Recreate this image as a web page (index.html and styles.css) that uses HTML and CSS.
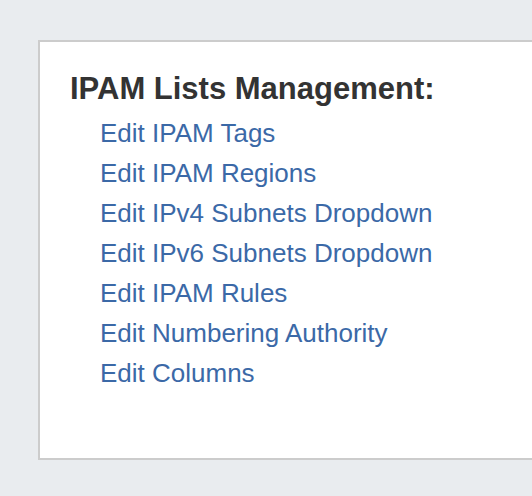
FILE: index.html
```html
<!DOCTYPE html>
<html>
<head>
<meta charset="utf-8">
<link rel="stylesheet" href="styles.css">
</head>
<body>
<div class="panel">
  <h2 class="title">IPAM Lists Management:</h2>
  <ul class="links">
    <li><a href="#">Edit IPAM Tags</a></li>
    <li><a href="#">Edit IPAM Regions</a></li>
    <li><a href="#">Edit IPv4 Subnets Dropdown</a></li>
    <li><a href="#">Edit IPv6 Subnets Dropdown</a></li>
    <li><a href="#">Edit IPAM Rules</a></li>
    <li><a href="#">Edit Numbering Authority</a></li>
    <li><a href="#">Edit Columns</a></li>
  </ul>
</div>
</body>
</html>
```

FILE: styles.css
```css
html, body {
  margin: 0;
  padding: 0;
}
body {
  background: #e9ecef;
  font-family: "Liberation Sans", Arial, sans-serif;
  overflow: hidden;
  height: 496px;
}
.panel {
  margin: 40px 0 0 38px;
  width: 494px;
  height: 420px;
  background: #fff;
  border: 2px solid #cccccc;
  border-right: none;
  padding: 29px 0 0 30px;
  box-sizing: border-box;
}
.title {
  margin: 0;
  font-size: 31px;
  font-weight: bold;
  color: #333;
  line-height: 36px;
}
.links {
  list-style: none;
  margin: 6px 0 0 0;
  padding: 0 0 0 30px;
}
.links li {
  font-size: 26px;
  line-height: 40px;
}
.links a {
  color: #3b69a7;
  text-decoration: none;
}
```
